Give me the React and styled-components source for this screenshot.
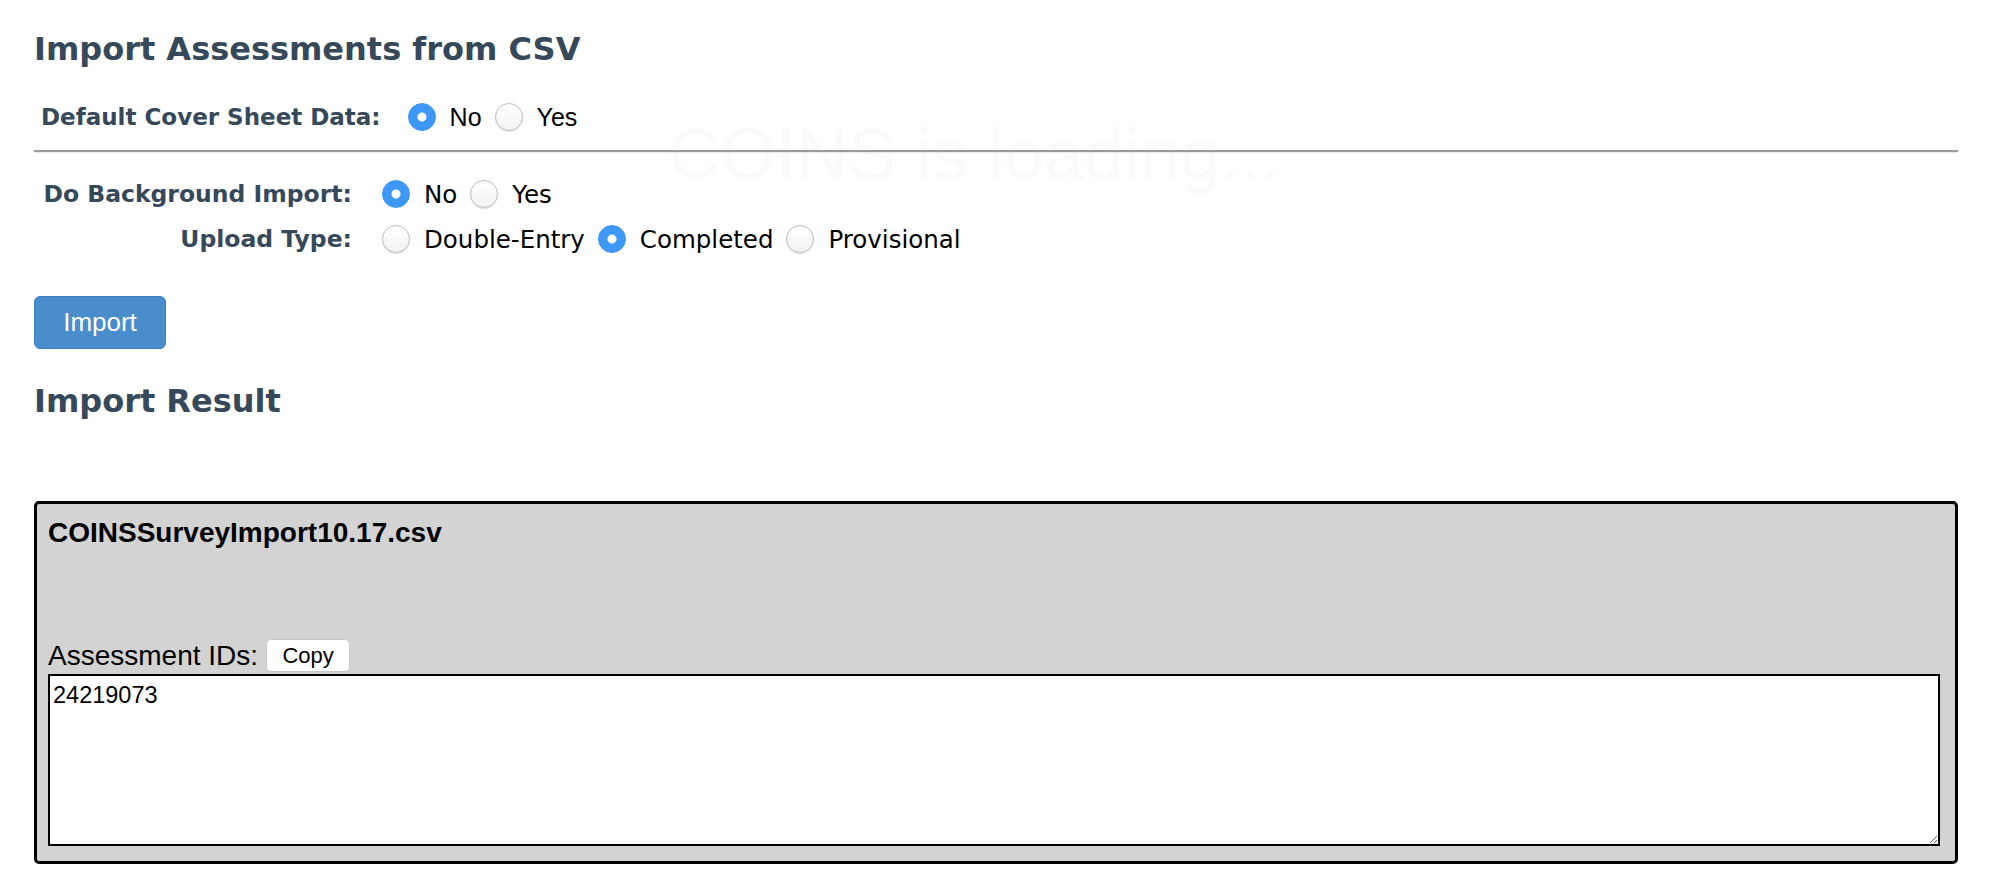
import React from "react";
import styled, { createGlobalStyle } from "styled-components";

const GlobalStyle = createGlobalStyle`
  body {
    margin: 0;
    background: #ffffff;
    font-family: "Liberation Sans", Arial, sans-serif;
  }
`;

const headingColor = "#36495a";

// Page
const Page = styled.div`
  position: relative;
  padding: 0 38px 16px 34px;
`;

const LoadingGhost = styled.div`
  position: absolute;
  left: 668px;
  top: 84px;
  font-family: "Liberation Sans", Arial, sans-serif;
  font-size: 72px;
  color: #f9fafb;
  pointer-events: none;
  white-space: nowrap;
`;

const Title = styled.h2`
  position: relative;
  margin: 29px 0 0;
  font-family: "DejaVu Sans", Verdana, sans-serif;
  font-weight: bold;
  font-size: 32px;
  line-height: 40px;
  color: ${headingColor};
`;

// Form rows
const CoverRow = styled.div`
  position: relative;
  display: flex;
  align-items: center;
  height: 40px;
  margin-top: 28px;
  padding-left: 7px;
`;

const FieldLabel = styled.span`
  font-family: "DejaVu Sans", Verdana, sans-serif;
  font-weight: bold;
  font-size: ${(p) => p.$size || 23}px;
  color: ${headingColor};
  text-align: ${(p) => (p.$right ? "right" : "left")};
  margin-right: ${(p) => p.$gap || 0}px;
`;

const RadioGroup = styled.div`
  display: flex;
  align-items: center;
  gap: 13px;
`;

const Option = styled.label`
  display: inline-flex;
  align-items: center;
  gap: 14px;
  cursor: pointer;
`;

const Radio = styled.input.attrs({ type: "radio" })`
  appearance: none;
  -webkit-appearance: none;
  width: 28px;
  height: 28px;
  margin: 0;
  border-radius: 50%;
  border: 1px solid #bcbcbc;
  background: linear-gradient(#ffffff, #f3f3f3);
  box-shadow: 0 1px 1px rgba(0, 0, 0, 0.12);
  cursor: pointer;

  &:checked {
    border-color: #3a94f5;
    background: radial-gradient(circle, #ffffff 0 4px, #3d98f8 5px);
    box-shadow: none;
  }
`;

const OptionText = styled.span`
  font-family: ${(p) =>
    p.$plain
      ? `"Liberation Sans", Arial, sans-serif`
      : `"DejaVu Sans", Tahoma, sans-serif`};
  font-size: ${(p) => (p.$plain ? 25 : 24.5)}px;
  color: #000;
`;

const Divider = styled.hr`
  position: relative;
  margin: 13px 0 0;
  border: 0;
  border-top: 2px solid #9b9b9b;
  border-bottom: 1px solid #ededed;
  height: 0;
`;

const OptionsGrid = styled.div`
  display: grid;
  grid-template-columns: 318px 1fr;
  grid-auto-rows: 44px;
  column-gap: 30px;
  row-gap: 1px;
  align-items: center;
  margin-top: 19px;
`;

// Buttons & results
const ImportButton = styled.button`
  display: block;
  margin-top: 35px;
  width: 132px;
  height: 53px;
  padding: 0;
  border: 1px solid #3d7fbf;
  border-radius: 6px;
  background: #4a8dcc;
  color: #ffffff;
  font-family: "Liberation Sans", Arial, sans-serif;
  font-size: 26px;
  cursor: pointer;
`;

const SectionTitle = styled.h3`
  margin: 32px 0 0;
  font-family: "DejaVu Sans", Verdana, sans-serif;
  font-weight: bold;
  font-size: 32px;
  line-height: 40px;
  color: ${headingColor};
`;

const ResultCard = styled.div`
  margin-top: 80px;
  border: 3px solid #000;
  border-radius: 5px;
  background: #d3d3d3;
  padding: 13px 15px 15px 11px;
`;

const FileName = styled.div`
  font-family: "Liberation Sans", Arial, sans-serif;
  font-weight: bold;
  font-size: 28px;
  line-height: 32px;
  color: #000;
`;

const IdsRow = styled.div`
  display: flex;
  align-items: center;
  margin-top: 90px;
  height: 33px;
`;

const IdsLabel = styled.span`
  font-family: "Liberation Sans", Arial, sans-serif;
  font-size: 28px;
  color: #000;
`;

const CopyButton = styled.button`
  margin-left: 8px;
  width: 84px;
  height: 33px;
  padding: 0;
  border: 1px solid #c6c6c6;
  border-radius: 5px;
  background: #ffffff;
  font-family: "Liberation Sans", Arial, sans-serif;
  font-size: 22px;
  color: #000;
`;

const IdsArea = styled.textarea`
  display: block;
  box-sizing: border-box;
  width: 100%;
  height: 172px;
  margin-top: 2px;
  padding: 6px 3px;
  border: 2px solid #000;
  background: #ffffff;
  font-family: "Liberation Sans", Arial, sans-serif;
  font-size: 23.5px;
  color: #000;
  outline: none;
`;

const RadioSet = ({ name, options, value, plain }) => (
  <RadioGroup>
    {options.map((opt) => (
      <Option key={opt}>
        <Radio name={name} defaultChecked={opt === value} />
        <OptionText $plain={plain}>{opt}</OptionText>
      </Option>
    ))}
  </RadioGroup>
);

export default function App() {
  return (
    <>
      <GlobalStyle />
      <Page>
        <LoadingGhost>COINS is loading...</LoadingGhost>
        <Title>Import Assessments from CSV</Title>

        <CoverRow>
          <FieldLabel $gap={27}>Default Cover Sheet Data:</FieldLabel>
          <RadioSet name="cover" options={["No", "Yes"]} value="No" plain />
        </CoverRow>

        <Divider />

        <OptionsGrid>
          <FieldLabel $right $size={23.5}>
            Do Background Import:
          </FieldLabel>
          <RadioSet name="background" options={["No", "Yes"]} value="No" />
          <FieldLabel $right $size={23.5}>
            Upload Type:
          </FieldLabel>
          <RadioSet
            name="uploadType"
            options={["Double-Entry", "Completed", "Provisional"]}
            value="Completed"
          />
        </OptionsGrid>

        <ImportButton>Import</ImportButton>

        <SectionTitle>Import Result</SectionTitle>

        <ResultCard>
          <FileName>COINSSurveyImport10.17.csv</FileName>
          <IdsRow>
            <IdsLabel>Assessment IDs:</IdsLabel>
            <CopyButton>Copy</CopyButton>
          </IdsRow>
          <IdsArea defaultValue="24219073" />
        </ResultCard>
      </Page>
    </>
  );
}
